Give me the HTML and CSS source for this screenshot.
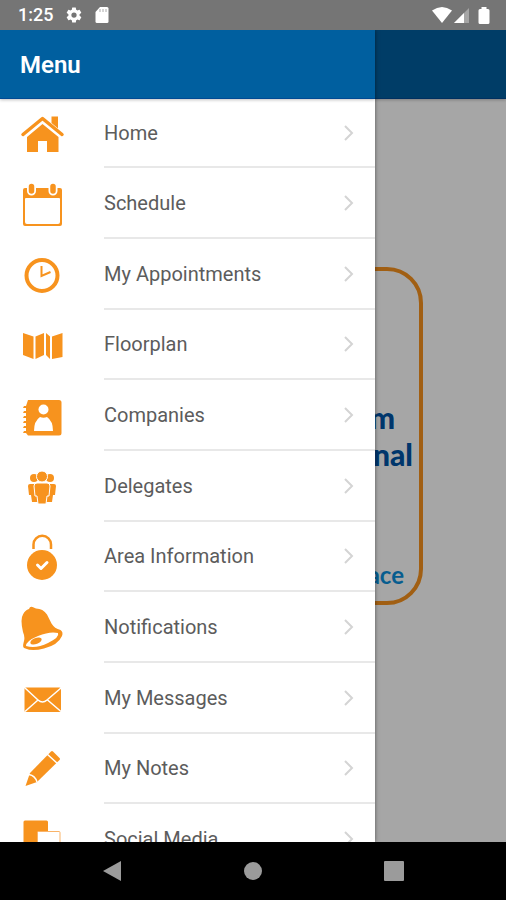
FILE: index.html
```html
<!DOCTYPE html>
<html lang="en">
<head>
<meta charset="utf-8">
<meta name="viewport" content="width=device-width, initial-scale=1">
<title>Menu</title>
<link rel="stylesheet" href="styles.css">
</head>
<body>
<header class="status">
  <span class="status-time">1:25</span>
  <svg class="status-gear" viewBox="0 0 24 24" width="18" height="18" aria-hidden="true"><path fill-rule="evenodd" d="M19.4 13a7.500 7.500 0 0 0 0-2l2.100-1.650a.5.5 0 0 0 .12-.64l-2-3.460a.5.5 0 0 0-.61-.22l-2.490 1a7.300 7.300 0 0 0-1.690-.98l-.38-2.650A.5.5 0 0 0 14 2h-4a.5.5 0 0 0-.49.420l-.38 2.650c-.61.250-1.170.59-1.690.98l-2.490-1a.5.5 0 0 0-.61.220l-2 3.460a.5.5 0 0 0 .12.640L4.570 11a7.900 7.900 0 0 0 0 2l-2.110 1.650a.5.5 0 0 0-.12.640l2 3.460c.12.220.39.300.61.220l2.490-1c.52.400 1.080.73 1.690.98l.38 2.650c.03.240.24.420.49.420h4c.25 0 .46-.18.49-.42l.38-2.650a7.300 7.300 0 0 0 1.690-.98l2.490 1c.23.090.49 0 .61-.22l2-3.460a.5.5 0 0 0-.12-.64zM12 15.500a3.500 3.500 0 1 1 0-7 3.500 3.500 0 0 1 0 7z"/></svg>
  <svg class="status-card" viewBox="0 0 14 16" width="14" height="16" aria-hidden="true"><path d="M5 0h7a1.500 1.500 0 0 1 1.500 1.500v13A1.500 1.500 0 0 1 12 16H2a1.500 1.500 0 0 1-1.500-1.500V5z"/><path class="slots" d="M5 2v3M8 2v3M11 2v3"/></svg>
  <svg class="status-wifi" viewBox="0 0 20 16" width="20" height="16" aria-hidden="true"><path d="M0 3.500Q10-3.500 20 3.500L10 16z"/></svg>
  <svg class="status-signal" viewBox="0 0 16 16" width="16" height="16" aria-hidden="true"><path class="faint" d="M15 1v15H0z"/><path d="M10 6v10H0z"/></svg>
  <svg class="status-battery" viewBox="0 0 12 17" width="12" height="17" aria-hidden="true"><path d="M3.500 0h5v2H10a1.500 1.500 0 0 1 1.500 1.500v12A1.500 1.500 0 0 1 10 17H2A1.500 1.500 0 0 1 .5 15.500v-12A1.500 1.500 0 0 1 2 2h1.500z"/></svg>
</header>

<div class="screen">
  <main class="page">
    <div class="page-bar"></div>
    <div class="page-body">
      <section class="emblem">
        <p class="emblem-title">m</p>
        <p class="emblem-title emblem-wide">nal</p>
        <p class="emblem-tag">ace</p>
      </section>
    </div>
  </main>
  <div class="scrim"></div>

  <aside class="drawer">
    <div class="drawer-bar"><h1>Menu</h1></div>
    <nav>
      <ul class="menu">
        <li><a href="#home">
          <svg class="icon" viewBox="0 0 48 48" aria-hidden="true"><path d="M33.500 6.500H40v12l-6.500-5.500z"/><path class="line" stroke-width="3.500" stroke-linecap="round" stroke-linejoin="round" d="M5 24.500L24.500 8.500l19.500 16"/><path d="M24.500 14L40.500 27v15H29V31h-9v11H9V27z"/></svg>
          <span class="label">Home</span><svg class="chevron" viewBox="0 0 10 16" aria-hidden="true"><path d="M1 1l7 7-7 7"/></svg></a></li>
        <li><a href="#schedule">
          <svg class="icon" viewBox="0 0 48 48" aria-hidden="true"><path fill-rule="evenodd" d="M7 8h35q2 0 2 2v34q0 2-2 2H7q-2 0-2-2V10q0-2 2-2zm1 10q-1 0-1 1v23q0 2 2 2h31q2 0 2-2V19q0-1-1-1z"/><path class="gap" stroke-width="9" stroke-linecap="round" d="M13.500 5v6M35 5v6"/><path class="line" stroke-width="5.500" stroke-linecap="round" d="M13.500 6.500v4.500M35 6.500v4.500"/></svg>
          <span class="label">Schedule</span><svg class="chevron" viewBox="0 0 10 16" aria-hidden="true"><path d="M1 1l7 7-7 7"/></svg></a></li>
        <li><a href="#appointments">
          <svg class="icon" viewBox="0 0 48 48" aria-hidden="true"><circle class="line" cx="24" cy="24.500" r="15.500" stroke-width="4"/><path class="line" stroke-width="2" d="M23.500 15v10l9-4"/></svg>
          <span class="label">My Appointments</span><svg class="chevron" viewBox="0 0 10 16" aria-hidden="true"><path d="M1 1l7 7-7 7"/></svg></a></li>
        <li><a href="#floorplan">
          <svg class="icon" viewBox="0 0 48 48" aria-hidden="true"><path d="M5 12l10.500 3.500V38L5 34zM17.500 15.500L26 12v22l-8.500 4zM28 12l4 3.500V38l-4-4zM34 15.500L44.500 12v24L34 38z"/></svg>
          <span class="label">Floorplan</span><svg class="chevron" viewBox="0 0 10 16" aria-hidden="true"><path d="M1 1l7 7-7 7"/></svg></a></li>
        <li><a href="#companies">
          <svg class="icon" viewBox="0 0 48 48" aria-hidden="true"><path d="M10 8h31q2.500 0 2.500 2.500V41q0 2.500-2.500 2.500H10L8 41H5l1-2h2v-3H5l1-2h2v-3H5l1-2h2v-3H5l1-2h2v-3H5l1-2h2v-3H5l1-2h2z"/><circle class="cut" cx="25.500" cy="17.500" r="5"/><path class="cut" d="M16 39q0-10 6-14 3.500 1.500 7 0 6 4 6 14z"/></svg>
          <span class="label">Companies</span><svg class="chevron" viewBox="0 0 10 16" aria-hidden="true"><path d="M1 1l7 7-7 7"/></svg></a></li>
        <li><a href="#delegates">
          <svg class="icon" viewBox="0 0 48 48" aria-hidden="true"><circle cx="16" cy="15" r="4"/><circle cx="32" cy="15" r="4"/><path d="M12 21h24q2 0 2 2l-1 9h-2l-1 7h-6V22h-8v17h-6l-1-7h-2l-1-9q0-2 2-2z"/><g class="front"><circle cx="24" cy="13.500" r="5.500"/><path d="M19 20h10q3 0 3 3l-1 10h-2l-1 8h-8l-1-8h-2l-1-10q0-3 3-3z"/></g></svg>
          <span class="label">Delegates</span><svg class="chevron" viewBox="0 0 10 16" aria-hidden="true"><path d="M1 1l7 7-7 7"/></svg></a></li>
        <li><a href="#area">
          <svg class="icon" viewBox="0 0 48 48" aria-hidden="true"><path class="line" stroke-width="2.500" d="M15.500 16v-4.500a8.500 8.500 0 0 1 17.500 0V16"/><circle cx="24" cy="32" r="15"/><path class="gap" stroke-width="3" stroke-linecap="round" stroke-linejoin="round" d="M19.500 32l3.500 3.500 6-6"/></svg>
          <span class="label">Area Information</span><svg class="chevron" viewBox="0 0 10 16" aria-hidden="true"><path d="M1 1l7 7-7 7"/></svg></a></li>
        <li><a href="#notifications">
          <svg class="icon" viewBox="0 0 48 48" aria-hidden="true"><path d="M11 5q1-3 3.500-2L18 4.500q7 0 11 6l4.500 9q3 5 9 6.500 3 2 1.500 6-4 9-18 12.500-12 3-18.500 0Q4 44 5.500 39q2-5-.5-11-3-13 0-17.500Q7 6 11 5z"/><path class="cut" d="M8 42q0-5 12-10t20-3q2 4-10 10T8 42z"/><ellipse cx="18" cy="37" rx="6" ry="3" transform="rotate(-22 18 37)"/></svg>
          <span class="label">Notifications</span><svg class="chevron" viewBox="0 0 10 16" aria-hidden="true"><path d="M1 1l7 7-7 7"/></svg></a></li>
        <li><a href="#messages">
          <svg class="icon" viewBox="0 0 48 48" aria-hidden="true"><rect x="6.500" y="12.500" width="36.500" height="24.500" rx="1.500"/><path class="gap" stroke-width="1.500" d="M7 13l13 12q4.500 4 9 0l14-12M7 36.500L20 25M43 36.500L29.500 25"/></svg>
          <span class="label">My Messages</span><svg class="chevron" viewBox="0 0 10 16" aria-hidden="true"><path d="M1 1l7 7-7 7"/></svg></a></li>
        <li><a href="#notes">
          <svg class="icon" viewBox="0 0 48 48" aria-hidden="true"><path d="M33 6.500q1-1 2 0l6.500 6.500q1 1 0 2L19 37 7.500 41 12 28z"/><path class="gap" stroke-width="1.500" d="M29 9l10.500 9.500M11 29.500q6 1 8 7.500"/></svg>
          <span class="label">My Notes</span><svg class="chevron" viewBox="0 0 10 16" aria-hidden="true"><path d="M1 1l7 7-7 7"/></svg></a></li>
        <li><a href="#social">
          <svg class="icon" viewBox="0 0 48 48" aria-hidden="true"><rect x="5.500" y="4.500" width="24.500" height="25" rx="1.500"/><rect class="cut sheet" x="19.500" y="15.500" width="22.500" height="24" rx="1"/></svg>
          <span class="label">Social Media</span><svg class="chevron" viewBox="0 0 10 16" aria-hidden="true"><path d="M1 1l7 7-7 7"/></svg></a></li>
      </ul>
    </nav>
  </aside>
</div>

<footer class="system">
  <button type="button" aria-label="Back"><svg viewBox="0 0 20 20" width="20" height="20" aria-hidden="true"><path d="M19 0v20L1 10z"/></svg></button>
  <button type="button" aria-label="Home screen"><svg viewBox="0 0 20 20" width="20" height="20" aria-hidden="true"><circle cx="10" cy="10" r="9"/></svg></button>
  <button type="button" aria-label="Recent apps"><svg viewBox="0 0 20 20" width="20" height="20" aria-hidden="true"><rect width="20" height="20" rx="1"/></svg></button>
</footer>
</body>
</html>
```
FILE: styles.css
```css
* {
  box-sizing: border-box;
}

body {
  margin: 0;
  height: 100vh;
  display: flex;
  flex-direction: column;
  overflow: hidden;
  font-family: Roboto, "Liberation Sans", sans-serif;
}

.status {
  flex: none;
  height: 30px;
  padding: 0 16px 0 18px;
  display: flex;
  align-items: center;
  background: #757575;
  color: #fff;
  fill: #fff;
}

.status-time {
  font-size: 18px;
  font-weight: 500;
  line-height: 30px;
}

.status-gear {
  margin-left: 12px;
}

.status-card {
  margin-left: 12px;
}

.slots {
  stroke: #aaa;
  stroke-width: 1;
}

.status-wifi {
  margin-left: auto;
}

.status-signal {
  margin: 0 8px 0 2px;
}

.faint {
  opacity: 0.35;
}

.screen {
  position: relative;
  flex: 1;
  min-height: 0;
  overflow: hidden;
}

.page {
  height: 100%;
  display: flex;
  flex-direction: column;
  background: #fff;
}

.page-bar,
.drawer-bar {
  flex: none;
  height: 69px;
  background: #005f9f;
  border-bottom: 1px solid #004a94;
  box-shadow: 0 1px 3px rgba(0, 0, 0, 0.25);
}

.page-body {
  flex: 1;
  padding-top: 168px;
}

.emblem {
  width: 340px;
  height: 338px;
  margin: 0 auto;
  padding: 128px 6px 0 0;
  border: 4px solid #f7931e;
  border-radius: 36px;
  text-align: right;
  font-family: Lato, "Open Sans", sans-serif;
  font-weight: 900;
}

.emblem-title {
  margin: 0 18px 0 0;
  font-size: 30px;
  line-height: 37px;
  color: #0054a6;
}

.emblem-wide {
  margin-right: 0;
}

.emblem-tag {
  margin: 86px 9px 0 0;
  font-size: 24px;
  font-weight: 700;
  line-height: 32px;
  color: #0a8fdc;
}

.scrim {
  position: absolute;
  inset: 0;
  background: rgba(0, 0, 0, 0.35);
}

.drawer {
  position: absolute;
  inset: 0 131px 0 0;
  overflow: hidden;
  background: #fff;
  box-shadow: 0 0 4px rgba(0, 0, 0, 0.5);
}

.drawer-bar {
  padding-left: 20px;
}

.drawer-bar h1 {
  margin: 0;
  font-size: 24px;
  font-weight: 600;
  line-height: 70px;
  color: #fff;
}

.menu {
  margin: 0;
  padding: 0;
  list-style: none;
}

.menu a {
  height: 71px;
  padding: 0 21px 0 18px;
  display: flex;
  align-items: center;
  color: #5c5c5c;
  text-decoration: none;
}

.menu li:nth-child(3n + 1) a {
  height: 70px;
}

.menu li:nth-child(3n + 2) a {
  height: 71px;
}

.menu li:first-child a {
  height: 69px;
}

.icon {
  flex: none;
  width: 48px;
  height: 48px;
  margin-right: 38px;
  fill: #f7931e;
}

.line {
  fill: none;
  stroke: #f7931e;
}

.gap {
  fill: none;
  stroke: #fff;
}

.cut {
  fill: #fff;
}

.sheet {
  stroke: #f9b368;
  stroke-width: 1;
}

.front {
  stroke: #fff;
  stroke-width: 1;
}

.label {
  flex: 1;
  align-self: stretch;
  display: flex;
  align-items: center;
  border-bottom: 2px solid #e8e8e8;
  margin-right: -31px;
  font-size: 20px;
  line-height: 24px;
}

.chevron {
  flex: none;
  width: 10px;
  height: 16px;
  margin-left: auto;
  margin-bottom: 2px;
  fill: none;
  stroke: #d4d4d4;
  stroke-width: 2;
}
.system {
  flex: none;
  height: 58px;
  padding: 0 42px;
  display: grid;
  grid-template-columns: repeat(3, 1fr);
  background: #000;
}

.system button {
  padding: 0;
  display: grid;
  place-items: center;
  border: 0;
  background: none;
  fill: #9b9b9b;
}
```
